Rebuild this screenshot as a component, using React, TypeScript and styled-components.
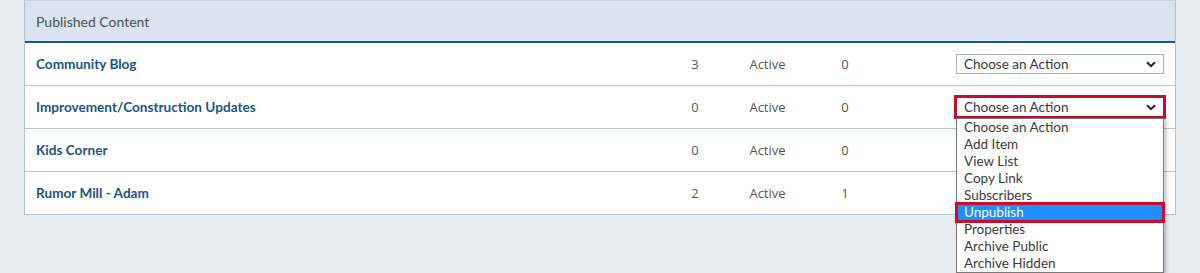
import React from 'react';
import styled, { createGlobalStyle } from 'styled-components';

const GlobalStyle = createGlobalStyle`
  html, body {
    margin: 0;
    padding: 0;
    background: #e8edf2;
  }
  body {
    font-family: Lato, 'Open Sans', sans-serif;
  }
`;

const Page = styled.div`
  padding: 0 24px;
  height: 273px;
  overflow: hidden;
`;

const Panel = styled.section`
  width: 1152px;
  box-sizing: border-box;
  border: 1px solid #b3c2d6;
  border-top-color: #c5d1e0;
  background: #fff;
`;

const PanelHeader = styled.div`
  height: 40px;
  display: flex;
  align-items: center;
  padding-left: 11px;
  background: #dae4f0;
  border-bottom: 2px solid #155a8a;
  font-size: 14px;
  color: #4a4f55;
`;

const Row = styled.div<{ $last?: boolean }>`
  display: grid;
  grid-template-columns: 629px 60px 85px 70px 1fr;
  align-items: center;
  height: 42px;
  padding: 0 11px 0 11px;
  border-bottom: ${(p) => (p.$last ? 'none' : '1px solid #b3c2d6')};
`;

const Name = styled.a`
  font-weight: 700;
  font-size: 13.6px;
  color: #1a5486;
  text-decoration: none;
`;

const Cell = styled.span`
  font-family: 'Open Sans', sans-serif;
  font-size: 13px;
  color: #555;
  text-align: center;
`;

const ActionCell = styled.div`
  position: relative;
  justify-self: end;
  width: 208px;
`;

const Select = styled.div<{ $focused?: boolean }>`
  box-sizing: border-box;
  height: 20px;
  display: flex;
  align-items: center;
  justify-content: space-between;
  padding: 0 7px 0 7px;
  border: 1px solid #a8b3c0;
  background: #fff;
  font-size: 13.5px;
  color: #3b3b3b;
  outline: ${(p) => (p.$focused ? '3px solid #cc0a2a' : 'none')};
  outline-offset: -1px;
`;

const Menu = styled.ul`
  position: absolute;
  top: 21px;
  left: 0;
  width: 208px;
  box-sizing: border-box;
  margin: 0;
  padding: 0;
  list-style: none;
  background: #fff;
  border: 1px solid #7a7a7a;
  box-shadow: 2px 2px 4px rgba(0, 0, 0, 0.25);
  z-index: 5;
`;

const Option = styled.li<{ $selected?: boolean }>`
  height: 17px;
  line-height: 17px;
  padding-left: 7px;
  font-size: 13.5px;
  color: ${(p) => (p.$selected ? '#fff' : '#3b3b3b')};
  background: ${(p) => (p.$selected ? '#1e8fff' : 'transparent')};
  outline: ${(p) => (p.$selected ? '3px solid #cc0a2a' : 'none')};
  outline-offset: -1px;
  position: relative;
`;

const Chevron = () => (
  <svg width="10" height="7" viewBox="0 0 10 7">
    <path d="M1 1.2 L5 5.2 L9 1.2" fill="none" stroke="#222" strokeWidth="2" />
  </svg>
);

const options = [
  'Choose an Action',
  'Add Item',
  'View List',
  'Copy Link',
  'Subscribers',
  'Unpublish',
  'Properties',
  'Archive Public',
  'Archive Hidden',
];

const rows = [
  { name: 'Community Blog', items: 3, status: 'Active', subs: 0 },
  { name: 'Improvement/Construction Updates', items: 0, status: 'Active', subs: 0, open: true },
  { name: 'Kids Corner', items: 0, status: 'Active', subs: 0, hidden: true },
  { name: 'Rumor Mill - Adam', items: 2, status: 'Active', subs: 1, hidden: true },
];

export default function App() {
  return (
    <>
      <GlobalStyle />
      <Page>
        <Panel>
          <PanelHeader>Published Content</PanelHeader>
          {rows.map((r, i) => (
            <Row key={r.name} $last={i === rows.length - 1}>
              <Name href="#">{r.name}</Name>
              <Cell>{r.items}</Cell>
              <Cell>{r.status}</Cell>
              <Cell>{r.subs}</Cell>
              <ActionCell>
                {!r.hidden && (
                  <Select $focused={r.open}>
                    <span>Choose an Action</span>
                    <Chevron />
                  </Select>
                )}
                {r.open && (
                  <Menu>
                    {options.map((o) => (
                      <Option key={o} $selected={o === 'Unpublish'}>
                        {o}
                      </Option>
                    ))}
                  </Menu>
                )}
              </ActionCell>
            </Row>
          ))}
        </Panel>
      </Page>
    </>
  );
}
